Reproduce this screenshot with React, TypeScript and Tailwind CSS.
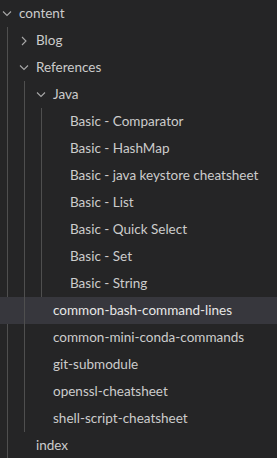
import React from "react";

type Node = { name: string; children?: Node[]; open?: boolean; selected?: boolean };

const tree: Node = {
  name: "content",
  open: true,
  children: [
    { name: "Blog", children: [], open: false },
    {
      name: "References",
      open: true,
      children: [
        {
          name: "Java",
          open: true,
          children: [
            { name: "Basic - Comparator" },
            { name: "Basic - HashMap" },
            { name: "Basic - java keystore cheatsheet" },
            { name: "Basic - List" },
            { name: "Basic - Quick Select" },
            { name: "Basic - Set" },
            { name: "Basic - String" },
          ],
        },
        { name: "common-bash-command-lines", selected: true },
        { name: "common-mini-conda-commands" },
        { name: "git-submodule" },
        { name: "openssl-cheatsheet" },
        { name: "shell-script-cheatsheet" },
      ],
    },
    { name: "index" },
  ],
};

const padClasses = ["pl-0", "pl-[17px]", "pl-[34px]", "pl-[51px]"];
const guideClasses = ["left-[7px]", "left-[24px]", "left-[41px]", "left-[58px]"];

function Chevron({ open }: { open: boolean }) {
  return (
    <svg width="14" height="16" viewBox="0 0 14 16" fill="none">
      {open ? (
        <path d="M3 5.5 L7 9.5 L11 5.5" stroke="#a8a8a8" strokeWidth="1.1" />
      ) : (
        <path d="M5 4 L9 8 L5 12" stroke="#a8a8a8" strokeWidth="1.1" />
      )}
    </svg>
  );
}

function Item({ node, level }: { node: Node; level: number }) {
  const isFolder = node.children !== undefined;
  return (
    <div>
      <div
        className={`flex h-[27px] items-center ${padClasses[level]} ${
          node.selected ? "bg-[#37373d] text-[#e7e7e7]" : "text-[#cccccc]"
        }`}
      >
        <div className="flex h-4 w-[14px] shrink-0 items-center justify-center">
          {isFolder && <Chevron open={!!node.open} />}
        </div>
        <span className="ml-[5px] whitespace-nowrap">{node.name}</span>
      </div>
      {isFolder && node.open && node.children && node.children.length > 0 && (
        <div className="relative">
          <div className={`absolute top-0 bottom-0 ${guideClasses[level]} w-px bg-[#4f4f4f]`} />
          {node.children.map((c) => (
            <Item key={c.name} node={c} level={level + 1} />
          ))}
        </div>
      )}
    </div>
  );
}

export default function App() {
  return (
    <div
      className="h-[458px] w-[277px] overflow-hidden bg-[#252526] text-[13.5px]"
      style={{ fontFamily: 'Lato, "Open Sans", sans-serif' }}
    >
      <Item node={tree} level={0} />
    </div>
  );
}
